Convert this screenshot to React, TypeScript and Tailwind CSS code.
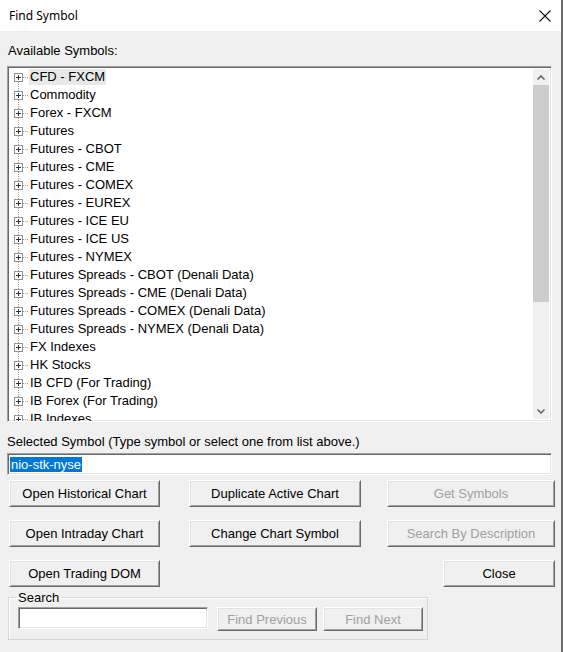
import React, { useState } from "react";

const symbolGroups = [
  "CFD - FXCM",
  "Commodity",
  "Forex - FXCM",
  "Futures",
  "Futures - CBOT",
  "Futures - CME",
  "Futures - COMEX",
  "Futures - EUREX",
  "Futures - ICE EU",
  "Futures - ICE US",
  "Futures - NYMEX",
  "Futures Spreads - CBOT (Denali Data)",
  "Futures Spreads - CME (Denali Data)",
  "Futures Spreads - COMEX (Denali Data)",
  "Futures Spreads - NYMEX (Denali Data)",
  "FX Indexes",
  "HK Stocks",
  "IB CFD (For Trading)",
  "IB Forex (For Trading)",
  "IB Indexes",
];

// classic raised / sunken 3D edges
const raised =
  "border border-t-white border-l-white border-r-[#696969] border-b-[#696969] shadow-[inset_1px_1px_0_#e3e3e3,inset_-1px_-1px_0_#a0a0a0]";
const sunken =
  "border border-t-[#a0a0a0] border-l-[#a0a0a0] border-r-white border-b-white shadow-[inset_1px_1px_0_#696969,inset_-1px_-1px_0_#e3e3e3]";

const Expander = ({ first }: { first: boolean }) => (
  <svg width="19" height="18" className="shrink-0" shapeRendering="crispEdges">
    {/* dotted tree lines */}
    {!first && (
      <line x1="8.5" y1="0" x2="8.5" y2="5" stroke="#a0a0a0" strokeDasharray="1 1" />
    )}
    <line x1="8.5" y1="14" x2="8.5" y2="18" stroke="#a0a0a0" strokeDasharray="1 1" />
    <line x1="13" y1="9.5" x2="18" y2="9.5" stroke="#a0a0a0" strokeDasharray="1 1" />
    <rect x="4.5" y="5.5" width="8" height="8" fill="#fff" stroke="#919191" />
    <line x1="6" y1="9.5" x2="11" y2="9.5" stroke="#333" />
    <line x1="8.5" y1="7" x2="8.5" y2="12" stroke="#333" />
  </svg>
);

const Btn = ({
  label,
  className,
  disabled,
}: {
  label: string;
  className: string;
  disabled?: boolean;
}) => (
  <button
    className={`${raised} ${className} bg-[#f0f0f0] text-[13px] leading-none flex items-center justify-center ${
      disabled ? "text-[#a0a0a0]" : "text-black"
    }`}
  >
    {label}
  </button>
);

const App = () => {
  const [symbol, setSymbol] = useState("nio-stk-nyse");

  return (
    <div
      className="w-[563px] h-[652px] bg-[#f0f0f0] border-r-2 border-r-[#6b6b6b] overflow-hidden"
      style={{ fontFamily: '"Liberation Sans", Arial, sans-serif' }}
    >
      {/* Title bar */}
      <div className="h-[31px] bg-white flex items-center justify-between pl-[9px] pr-[10px]">
        <span className="text-[12px] text-black" style={{ fontFamily: '"Noto Sans", sans-serif' }}>
          Find Symbol
        </span>
        <svg width="12" height="12" viewBox="0 0 12 12">
          <path d="M0.5 0.5 L11.5 11.5 M11.5 0.5 L0.5 11.5" stroke="#111" strokeWidth="1.1" />
        </svg>
      </div>

      <div className="pt-[12px]">
        <div className="pl-[8px] text-[13px] leading-[15px] text-black">Available Symbols:</div>

        {/* Symbol tree */}
        <div className={`${sunken} mt-[8px] ml-[7px] w-[545px] h-[356px] bg-white flex`}>
          <div className="flex-1 pt-[1px] pl-[2px] overflow-hidden">
            {symbolGroups.map((g, i) => (
              <div key={g} className="h-[18px] flex items-center text-[13px] text-black">
                <Expander first={i === 0} />
                <span className={`px-[1px] leading-[16px] ${i === 0 ? "bg-[#e8e8e8]" : ""}`}>{g}</span>
              </div>
            ))}
          </div>
          {/* Vertical scrollbar */}
          <div className="w-[16px] my-[2px] mr-[2px] bg-[#f0f0f0] flex flex-col">
            <div className="h-[16px] flex items-center justify-center">
              <svg width="8" height="5" viewBox="0 0 8 5">
                <path d="M0.5 4.5 L4 1 L7.5 4.5" fill="none" stroke="#606060" strokeWidth="1.5" />
              </svg>
            </div>
            <div className="h-[217px] bg-[#cdcdcd]" />
            <div className="flex-1" />
            <div className="h-[16px] flex items-center justify-center">
              <svg width="8" height="5" viewBox="0 0 8 5">
                <path d="M0.5 0.5 L4 4 L7.5 0.5" fill="none" stroke="#606060" strokeWidth="1.5" />
              </svg>
            </div>
          </div>
        </div>

        <div className="pl-[7px] mt-[12px] text-[13px] leading-[15px] text-black">
          Selected Symbol (Type symbol or select one from list above.)
        </div>

        <div className={`${sunken} mt-[4px] ml-[7px] w-[545px] h-[22px] bg-white flex items-center pl-[2px]`}>
          <span className="bg-[#0078d7] text-white text-[13px] leading-[15px] px-[1px]">{symbol}</span>
          <input
            className="hidden"
            value={symbol}
            onChange={(e) => setSymbol(e.target.value)}
          />
        </div>

        {/* Action buttons */}
        <div className="flex mt-[5px] h-[27px]">
          <Btn label="Open Historical Chart" className="ml-[9px] w-[151px]" />
          <Btn label="Duplicate Active Chart" className="ml-[29px] w-[172px]" />
          <Btn label="Get Symbols" className="ml-[26px] w-[168px]" disabled />
        </div>
        <div className="flex mt-[13px] h-[27px]">
          <Btn label="Open Intraday Chart" className="ml-[9px] w-[151px]" />
          <Btn label="Change Chart Symbol" className="ml-[29px] w-[172px]" />
          <Btn label="Search By Description" className="ml-[26px] w-[168px]" disabled />
        </div>
        <div className="flex mt-[13px] h-[27px]">
          <Btn label="Open Trading DOM" className="ml-[9px] w-[151px]" />
          <Btn label="Close" className="ml-auto mr-[6px] w-[112px]" />
        </div>

        {/* Search group */}
        <fieldset className="mt-[3px] ml-[8px] w-[420px] h-[50px] border border-[#d5d5d5] shadow-[inset_1px_1px_0_#fff] pl-[9px] pr-[3px] flex">
          <legend className="-ml-[2px] px-[2px] text-[13px] leading-[15px] text-black">Search</legend>
          <div className="flex items-start gap-[6px]">
            <div className={`${sunken} w-[190px] h-[22px] bg-white mt-[2px]`} />
            <Btn label="Find Previous" className="ml-[3px] w-[100px] h-[24px] mt-[2px]" disabled />
            <Btn label="Find Next" className="w-[100px] h-[24px] mt-[2px]" disabled />
          </div>
        </fieldset>
      </div>
    </div>
  );
};

export default App;
